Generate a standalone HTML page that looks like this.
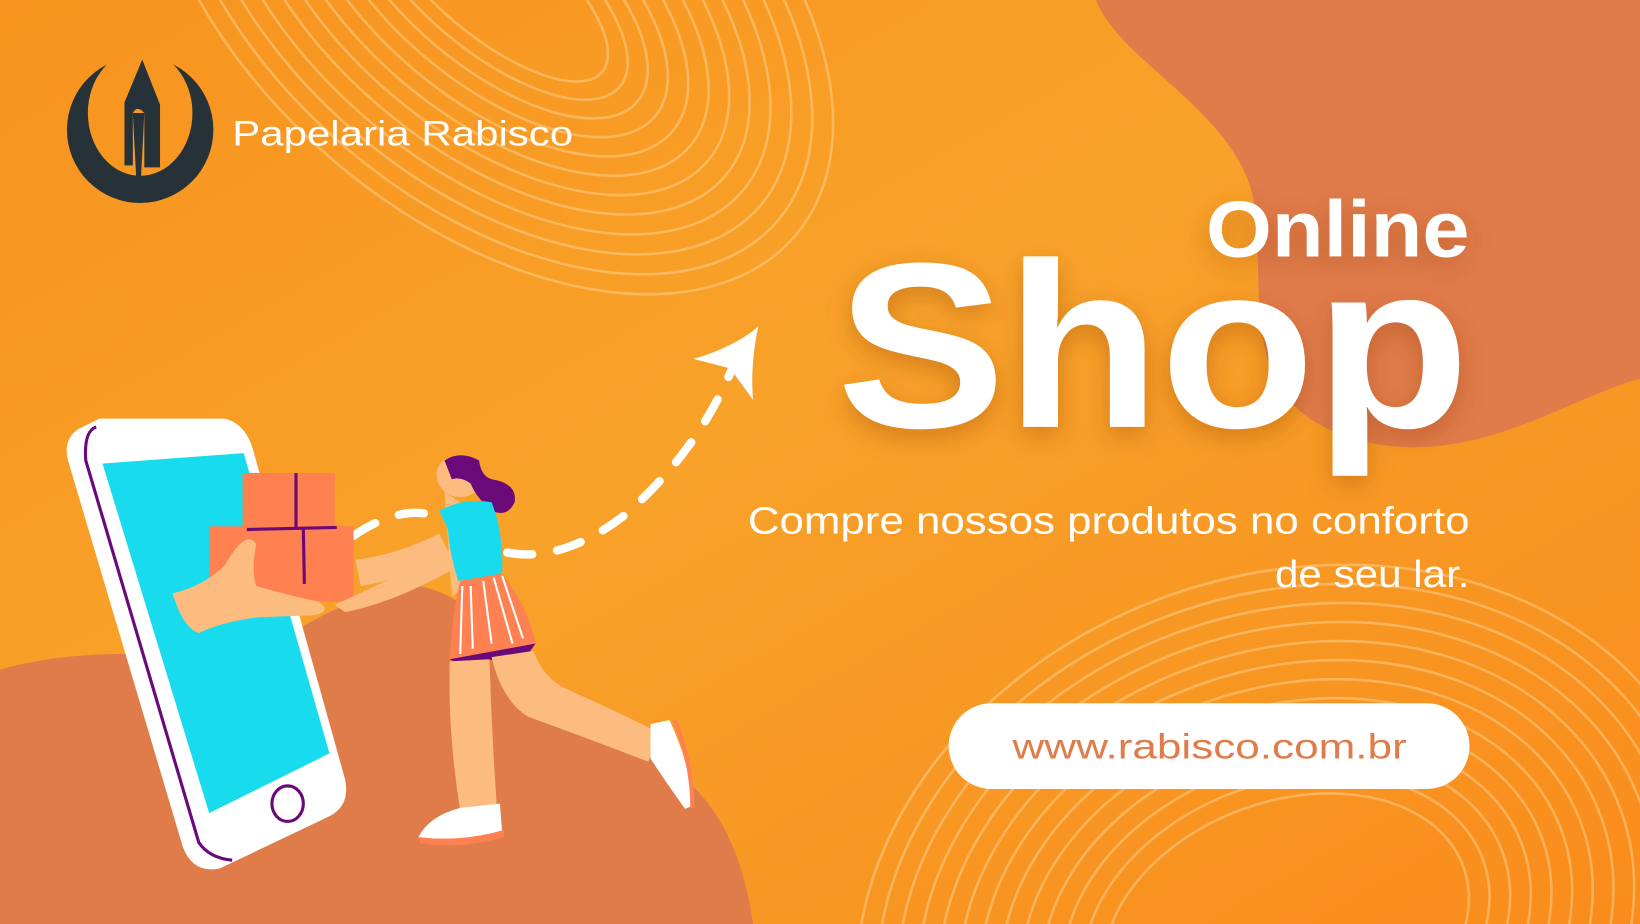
<!DOCTYPE html>
<html><head><meta charset="utf-8"><style>
html,body{margin:0;padding:0;width:1640px;height:924px;overflow:hidden;position:relative}
svg{display:block;position:absolute;left:0;top:0}
text{font-family:"Liberation Sans",sans-serif}
</style></head><body>
<svg width="1640" height="924" viewBox="0 0 1568 883" preserveAspectRatio="none" xmlns="http://www.w3.org/2000/svg">
<defs>
<linearGradient id="bg" x1="0" y1="0" x2="1" y2="1">
<stop offset="0" stop-color="#f7931e"/><stop offset="0.45" stop-color="#f8a22a"/><stop offset="1" stop-color="#f98c1c"/>
</linearGradient>
<filter id="sh" x="-20%" y="-20%" width="140%" height="140%"><feDropShadow dx="0" dy="8" stdDeviation="12" flood-color="#8a3a10" flood-opacity="0.35"/></filter>
<clipPath id="c"><rect width="1568" height="883"/></clipPath>
<mask id="lm"><rect width="400" height="300" fill="#fff"/><ellipse cx="134" cy="108" rx="50" ry="60" fill="#000"/><path d="M108,40 L160,40 L152,70 L116,70 Z" fill="#000"/></mask>
</defs>
<g clip-path="url(#c)">
<rect width="1568" height="883" fill="url(#bg)"/>
<path d="M1048,0 C1070,60 1190,110 1200,200 C1210,300 1180,400 1320,425 C1420,440 1500,380 1568,362 L1568,0 Z" fill="#e07b4a"/>
<path d="M0,640 C60,622 160,618 230,640 C280,600 340,565 400,560 C460,570 500,640 560,690 C620,720 700,740 720,883 L0,883 Z" fill="#e07b4a"/>
<g fill="none" stroke="#ffd9a0" stroke-opacity="0.45" stroke-width="2.5" transform="translate(470,-20) rotate(40)">
<ellipse rx="380" ry="230"/><ellipse rx="358" ry="213"/><ellipse rx="336" ry="196"/><ellipse rx="314" ry="179"/><ellipse rx="292" ry="162"/><ellipse rx="270" ry="146"/><ellipse rx="248" ry="130"/><ellipse rx="226" ry="114"/><ellipse rx="204" ry="98"/><ellipse rx="182" ry="83"/><ellipse rx="160" ry="68"/><ellipse rx="138" ry="54"/>
</g>
<g fill="none" stroke="#ffd9a0" stroke-opacity="0.45" stroke-width="2.5" transform="translate(1230,890) rotate(-20)">
<ellipse rx="420" ry="340"/><ellipse rx="400" ry="322"/><ellipse rx="380" ry="304"/><ellipse rx="360" ry="286"/><ellipse rx="340" ry="268"/><ellipse rx="320" ry="250"/><ellipse rx="300" ry="232"/><ellipse rx="280" ry="214"/><ellipse rx="260" ry="196"/><ellipse rx="240" ry="178"/><ellipse rx="220" ry="160"/><ellipse rx="200" ry="142"/><ellipse rx="180" ry="124"/>
</g>
<circle cx="134" cy="124" r="70" fill="#263238" mask="url(#lm)"/>
<path d="M119,98 L136,57 L153,100 L153,160 L138,160 L138,108 Q131,100 127,108 L127,158 L119,158 Z" fill="#263238"/>
<path d="M127,108 L131,185 L134,185 L138,108 Z" fill="#263238"/>
<text x="222" y="139" font-size="34" fill="#fff" textLength="326" lengthAdjust="spacingAndGlyphs">Papelaria Rabisco</text>
<g filter="url(#sh)" fill="#fff" font-weight="bold">
<text x="1153" y="245" font-size="76" textLength="252" lengthAdjust="spacingAndGlyphs">Online</text>
<text x="800" y="408" font-size="225" textLength="605" lengthAdjust="spacingAndGlyphs">Shop</text>
</g>
<text x="715" y="510" font-size="36" fill="#fff" textLength="690" lengthAdjust="spacingAndGlyphs">Compre nossos produtos no conforto</text>
<text x="1219" y="561" font-size="36" fill="#fff" textLength="186" lengthAdjust="spacingAndGlyphs">de seu lar.</text>
<rect x="907" y="672" width="498" height="82" rx="41" fill="#fff"/>
<text x="968" y="725" font-size="34" fill="#e07b4a" textLength="377" lengthAdjust="spacingAndGlyphs">www.rabisco.com.br</text>
<path d="M338,512 C370,490 400,485 420,495 M485,528 C520,535 560,522 600,490 C650,445 680,400 700,352" fill="none" stroke="#fff" stroke-width="8" stroke-linecap="round" stroke-dasharray="24 24"/>
<path d="M663,343 C690,335 710,325 725,312 C720,335 718,360 720,382 L698,352 Z" fill="#fff"/>
<path d="M95,400 L215,400 Q235,405 242,430 L330,745 Q335,770 315,780 L210,830 Q185,835 175,810 L65,440 Q60,420 75,410 Z" fill="#fff"/>
<path d="M98,443 L233,433 L315,720 L200,777 Z" fill="#18dced"/>
<path d="M92,408 Q80,412 82,440 L190,805 Q200,820 222,822" fill="none" stroke="#6a0a7a" stroke-width="3"/>
<ellipse cx="275" cy="768" rx="15" ry="17" fill="#fff" stroke="#6a0a7a" stroke-width="3"/>
<rect x="232" y="452" width="88" height="53" fill="#ff8050"/>
<rect x="200" y="503" width="138" height="72" fill="#ff8050"/>
<path d="M283,452 L283,505 M236,506 L322,504 M290,505 L291,558" stroke="#6a0a7a" stroke-width="3" fill="none"/>
<path d="M165,567 Q195,560 215,540 Q235,505 245,520 Q240,545 245,560 Q280,570 305,575 Q318,585 300,588 L245,590 Q210,595 190,605 Q175,600 165,567 Z" fill="#fcbb7f"/>
<path d="M432,570 L468,548 L440,480 L425,470 Z" fill="#fcbb7f"/>
<path d="M340,535 Q380,530 420,510 L430,530 Q380,555 345,560 Z" fill="#fcbb7f"/>
<path d="M320,578 Q360,560 430,525 L440,540 Q380,575 330,585 Z" fill="#fcbb7f"/>
<path d="M418,448 Q425,432 445,440 L455,470 Q440,480 425,470 Q415,460 418,448 Z" fill="#fcbb7f"/>
<path d="M425,440 Q440,430 458,440 Q460,455 470,458 Q495,462 492,480 Q485,495 470,488 Q455,475 450,462 Q440,455 432,458 Z" fill="#6a0a7a"/>
<path d="M420,488 Q445,475 470,480 Q482,510 480,550 L438,555 Q430,530 428,505 Z" fill="#18dced"/>
<path d="M440,555 L480,548 Q505,580 512,615 L430,630 Q432,590 440,555 Z" fill="#ff8050"/>
<path d="M442,560 L440,625 M450,560 L452,620 M462,555 L470,615 M472,552 L490,615 M480,550 L500,610" stroke="#fff" stroke-width="2" fill="none"/>
<path d="M430,630 L512,615 L505,625 L440,635 Z" fill="#6a0a7a"/>
<path d="M430,632 L468,630 Q470,700 475,770 L440,775 Q428,700 430,632 Z" fill="#fcbb7f"/>
<path d="M470,628 L510,622 Q520,650 545,660 Q590,680 630,700 L620,728 Q560,705 505,685 Q480,670 470,628 Z" fill="#fcbb7f"/>
<path d="M440,772 L478,768 L480,795 Q440,805 400,800 Q410,780 440,772 Z" fill="#fff"/>
<path d="M400,800 Q440,805 482,793 L482,800 Q440,812 402,806 Z" fill="#ff8050"/>
<path d="M622,692 L640,688 Q660,730 662,770 L655,773 Q635,745 622,725 Z" fill="#fff"/>
<path d="M645,688 Q662,730 662,772" stroke="#ff8050" stroke-width="4" fill="none"/>
</g>
</svg>
</body></html>
